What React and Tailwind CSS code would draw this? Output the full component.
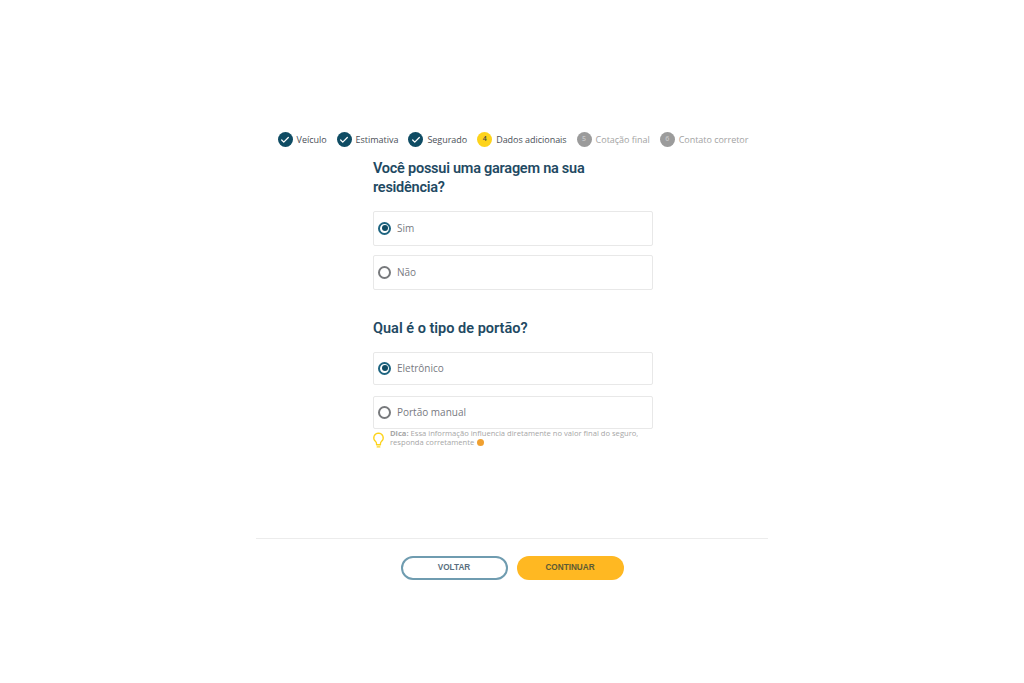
import React from 'react';
import { Check } from 'lucide-react';

const steps = [
  { label: 'Veículo', state: 'done' },
  { label: 'Estimativa', state: 'done' },
  { label: 'Segurado', state: 'done' },
  { label: 'Dados adicionais', state: 'current', n: 4 },
  { label: 'Cotação final', state: 'todo', n: 5 },
  { label: 'Contato corretor', state: 'todo', n: 6 },
];

const Step = ({ step }) => (
  <div className="flex items-center gap-[4px]">
    {step.state === 'done' && (
      <span className="flex h-[15px] w-[15px] items-center justify-center rounded-full bg-[#0f4c64]">
        <Check className="h-[10px] w-[10px] text-white" strokeWidth={3} />
      </span>
    )}
    {step.state === 'current' && (
      <span className="flex h-[15px] w-[15px] items-center justify-center rounded-full bg-[#fdd31b] text-[7px] font-semibold text-[#444]">
        {step.n}
      </span>
    )}
    {step.state === 'todo' && (
      <span className="flex h-[15px] w-[15px] items-center justify-center rounded-full bg-[#9b9b9b] text-[7px] font-semibold text-[#c9c9c9]">
        {step.n}
      </span>
    )}
    <span className={`text-[9px] tracking-[-0.03px] ${step.state === 'todo' ? 'text-[#a3a3a3]' : 'text-[#4a4f57]'}`}>
      {step.label}
    </span>
  </div>
);

const Option = ({ label, checked, height }) => (
  <div className={`flex items-center gap-[6px] rounded-[2px] border border-[#e8e8e8] pl-[4px] ${height}`}>
    {checked ? (
      <span className="flex h-[13px] w-[13px] items-center justify-center rounded-full border-2 border-[#1d6480]">
        <span className="h-[6px] w-[6px] rounded-full bg-[#0f4c64]" />
      </span>
    ) : (
      <span className="h-[13px] w-[13px] rounded-full border-2 border-[#77797c]" />
    )}
    <span className="text-[10px] text-[#77797f]">{label}</span>
  </div>
);

export default function App() {
  return (
    <div className="min-h-[683px] bg-white font-['Open_Sans',sans-serif]">
      <div className="mx-auto w-[512px] pt-[132px]">
        <div className="flex justify-center gap-[10px] pl-[2px]">
          {steps.map((s) => (
            <Step key={s.label} step={s} />
          ))}
        </div>

        <div className="ml-[117px] mt-[12px] w-[280px]">
          <h2 className="w-[240px] font-['Roboto',sans-serif] text-[14.5px] font-semibold leading-[19px] tracking-[-0.25px] text-[#1f4a63]">
            Você possui uma garagem na sua residência?
          </h2>
          <div className="mt-[14px] flex flex-col gap-[9.5px]">
            <Option label="Sim" checked height="h-[34.5px]" />
            <Option label="Não" height="h-[34.5px]" />
          </div>

          <h2 className="mt-[29px] font-['Roboto',sans-serif] text-[14.5px] font-semibold leading-[19px] text-[#1f4a63]">
            Qual é o tipo de portão?
          </h2>
          <div className="mt-[14px] flex flex-col gap-[11px]">
            <Option label="Eletrônico" checked height="h-[33px]" />
            <Option label="Portão manual" height="h-[33px]" />
          </div>

          <div className="flex items-start gap-[5px]">
            <svg viewBox="0 0 16 22" fill="none" stroke="#fdd31b" strokeWidth="1.8" strokeLinecap="round" strokeLinejoin="round" className="-ml-[1px] mt-[3px] h-[16px] w-[13px] shrink-0">
              <path d="M8 1.5a6.5 6.5 0 0 0-4 11.6c.9.8 1.3 1.8 1.3 3v1.4h5.4v-1.4c0-1.2.4-2.2 1.3-3A6.5 6.5 0 0 0 8 1.5z" />
              <path d="M6.2 20.5h3.6" />
            </svg>
            <p className="text-[7.6px] leading-[9.5px] text-[#a6a6a6]">
              <b>Dica:</b> Essa informação influencia diretamente no valor final do seguro,
              <br />
              responda corretamente <span className="ml-[1px] inline-block h-[7px] w-[7px] rounded-full bg-[#f0a030] align-[-1px]" />
            </p>
          </div>
        </div>

        <div className="mt-[90px] border-t border-[#ececec] pt-[17px]">
          <div className="flex justify-center gap-[9px]">
            <button className="h-[24px] w-[107px] rounded-full border-2 border-[#6f9cb0] bg-white pt-[1px] font-['Liberation_Sans',sans-serif] text-[8.2px] font-bold text-[#5a6f80]">
              VOLTAR
            </button>
            <button className="h-[24px] w-[107px] rounded-full bg-[#ffb822] pt-[1px] font-['Liberation_Sans',sans-serif] text-[8.2px] font-bold text-[#5c5a34]">
              CONTINUAR
            </button>
          </div>
        </div>
      </div>
    </div>
  );
}
